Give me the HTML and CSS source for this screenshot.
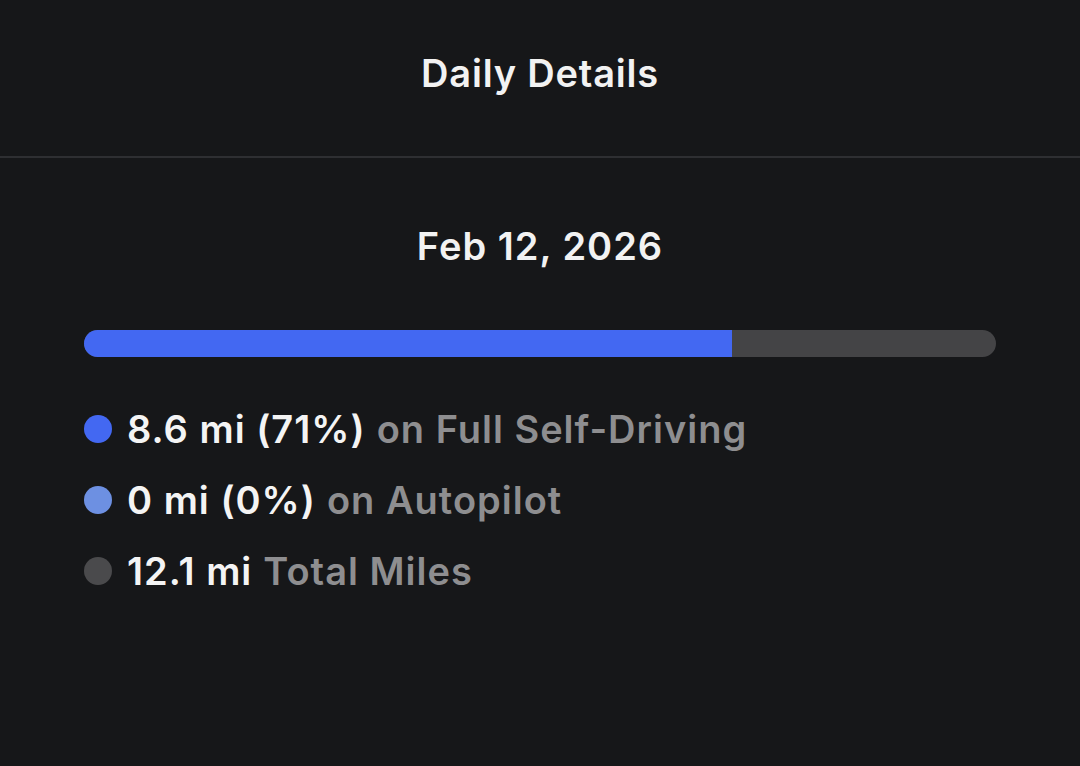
FILE: index.html
```html
<!DOCTYPE html>
<html lang="en">
<head>
  <meta charset="UTF-8" />
  <meta name="viewport" content="width=device-width, initial-scale=1" />
  <title>Daily Details</title>
  <link rel="stylesheet" href="styles.css">
</head>
<body>
  <div class="header">
    <h1>Daily Details</h1>
  </div>

  <div class="details">
    <h2 class="date">Feb 12, 2026</h2>

    <div class="bar">
      <div class="bar-fill" style="width: 71%;"></div>
    </div>

    <ul class="legend">
      <li>
        <span class="dot dot-fsd"></span>
        <span class="value">8.6 mi (71%)</span>
        <span class="label">on Full Self-Driving</span>
      </li>
      <li>
        <span class="dot dot-ap"></span>
        <span class="value">0 mi (0%)</span>
        <span class="label">on Autopilot</span>
      </li>
      <li>
        <span class="dot dot-total"></span>
        <span class="value">12.1 mi</span>
        <span class="label">Total Miles</span>
      </li>
    </ul>
  </div>
</body>
</html>
```

FILE: styles.css
```css
* {
  margin: 0;
  padding: 0;
  box-sizing: border-box;
  font-family: Inter, 'Noto Sans', sans-serif;
}
body {
  background-color: #161719;
  color: #f2f2f2;
  height: 100vh;
}
.header {
  height: 158px;
  display: flex;
  justify-content: center;
  align-items: center;
  padding-bottom: 10px;
  border-bottom: 2px solid #2e2f32;
}
.header h1 {
  font-size: 38px;
  font-weight: 600;
  letter-spacing: 0.8px;
}
.details {
  padding: 0 84px;
}
.date {
  text-align: center;
  font-size: 38px;
  font-weight: 600;
  letter-spacing: 1px;
  margin-top: 63px;
  line-height: 50px;
}
.bar {
  margin-top: 59px;
  height: 27px;
  border-radius: 14px;
  background-color: #444446;
  overflow: hidden;
}
.bar-fill {
  height: 100%;
  background-color: #4368f2;
}
.legend {
  list-style: none;
  margin-top: 36px;
}
.legend li {
  display: flex;
  align-items: center;
  height: 71px;
  font-size: 38px;
  font-weight: 600;
  letter-spacing: 1px;
}
.dot {
  width: 28px;
  height: 28px;
  border-radius: 50%;
  margin-right: 15px;
  flex-shrink: 0;
}
.dot-fsd {
  background-color: #4368f2;
}
.dot-ap {
  background-color: #6d90e2;
}
.dot-total {
  background-color: #4a4a4c;
}
.value {
  color: #f4f4f4;
  margin-right: 11px;
}
.label {
  color: #8e8e90;
}
```
